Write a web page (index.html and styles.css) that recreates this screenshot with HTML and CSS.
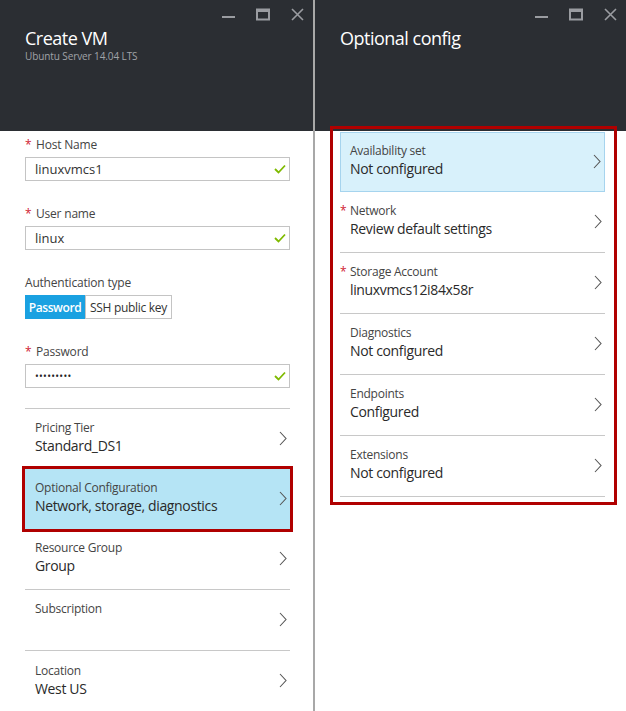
FILE: index.html
```html
<!DOCTYPE html>
<html lang="en">

<head>
    <meta charset="UTF-8">
    <title>Create VM</title>
    <link rel="stylesheet" href="styles.css">
</head>

<body>
    <div class="portal">
        <!-- Create VM blade -->
        <section class="blade blade-create">
            <header class="blade-header">
                <div class="blade-title">
                    <h1>Create VM</h1>
                    <p class="subtitle">Ubuntu Server 14.04 LTS</p>
                </div>
                <div class="window-controls">
                    <svg width="13" height="13" viewBox="0 0 13 13"><rect x="0" y="8" width="13" height="2" fill="currentColor"/></svg>
                    <svg width="14" height="13" viewBox="0 0 14 13"><path d="M1 1.5h12v10h-12z" fill="none" stroke="currentColor" stroke-width="2"/><rect x="1" y="1" width="12" height="3" fill="currentColor"/></svg>
                    <svg width="13" height="13" viewBox="0 0 13 13"><path d="M1 1l11 11M12 1l-11 11" stroke="currentColor" stroke-width="1.6"/></svg>
                </div>
            </header>

            <div class="blade-body form">
                <div class="field">
                    <label class="field-label"><span class="req">*</span>Host Name</label>
                    <div class="input">
                        <span>linuxvmcs1</span>
                        <svg class="check" width="12" height="10" viewBox="0 0 12 10"><path d="M1 5l3.5 3.5L11 1.5" fill="none" stroke="#7fba00" stroke-width="1.8"/></svg>
                    </div>
                </div>

                <div class="field">
                    <label class="field-label"><span class="req">*</span>User name</label>
                    <div class="input">
                        <span>linux</span>
                        <svg class="check" width="12" height="10" viewBox="0 0 12 10"><path d="M1 5l3.5 3.5L11 1.5" fill="none" stroke="#7fba00" stroke-width="1.8"/></svg>
                    </div>
                </div>

                <div class="field">
                    <label class="field-label">Authentication type</label>
                    <div class="toggle">
                        <button class="toggle-btn toggle-on">Password</button>
                        <button class="toggle-btn">SSH public key</button>
                    </div>
                </div>

                <div class="field">
                    <label class="field-label"><span class="req">*</span>Password</label>
                    <div class="input">
                        <span class="dots">•••••••••</span>
                        <svg class="check" width="12" height="10" viewBox="0 0 12 10"><path d="M1 5l3.5 3.5L11 1.5" fill="none" stroke="#7fba00" stroke-width="1.8"/></svg>
                    </div>
                </div>

                <ul class="nav-list">
                    <li class="nav-item">
                        <div class="nav-text">
                            <div class="nav-label">Pricing Tier</div>
                            <div class="nav-value">Standard_DS1</div>
                        </div>
                        <svg class="chevron" width="8" height="15" viewBox="0 0 8 15"><path d="M1 1l6 6.5L1 14" fill="none" stroke="currentColor" stroke-width="1.1"/></svg>
                    </li>
                    <li class="callout callout-left">
                        <div class="nav-item nav-selected">
                            <div class="nav-text">
                                <div class="nav-label">Optional Configuration</div>
                                <div class="nav-value">Network, storage, diagnostics</div>
                            </div>
                            <svg class="chevron" width="8" height="15" viewBox="0 0 8 15"><path d="M1 1l6 6.5L1 14" fill="none" stroke="currentColor" stroke-width="1.1"/></svg>
                        </div>
                    </li>
                    <li class="nav-item">
                        <div class="nav-text">
                            <div class="nav-label">Resource Group</div>
                            <div class="nav-value">Group</div>
                        </div>
                        <svg class="chevron" width="8" height="15" viewBox="0 0 8 15"><path d="M1 1l6 6.5L1 14" fill="none" stroke="currentColor" stroke-width="1.1"/></svg>
                    </li>
                    <li class="nav-item">
                        <div class="nav-text">
                            <div class="nav-label">Subscription</div>
                            <div class="nav-value">&nbsp;</div>
                        </div>
                        <svg class="chevron" width="8" height="15" viewBox="0 0 8 15"><path d="M1 1l6 6.5L1 14" fill="none" stroke="currentColor" stroke-width="1.1"/></svg>
                    </li>
                    <li class="nav-item nav-last">
                        <div class="nav-text">
                            <div class="nav-label">Location</div>
                            <div class="nav-value">West US</div>
                        </div>
                        <svg class="chevron" width="8" height="15" viewBox="0 0 8 15"><path d="M1 1l6 6.5L1 14" fill="none" stroke="currentColor" stroke-width="1.1"/></svg>
                    </li>
                </ul>
            </div>
        </section>

        <!-- Optional config blade -->
        <section class="blade blade-optional">
            <header class="blade-header">
                <div class="blade-title">
                    <h1>Optional config</h1>
                </div>
                <div class="window-controls">
                    <svg width="13" height="13" viewBox="0 0 13 13"><rect x="0" y="8" width="13" height="2" fill="currentColor"/></svg>
                    <svg width="14" height="13" viewBox="0 0 14 13"><path d="M1 1.5h12v10h-12z" fill="none" stroke="currentColor" stroke-width="2"/><rect x="1" y="1" width="12" height="3" fill="currentColor"/></svg>
                    <svg width="13" height="13" viewBox="0 0 13 13"><path d="M1 1l11 11M12 1l-11 11" stroke="currentColor" stroke-width="1.6"/></svg>
                </div>
            </header>

            <div class="callout callout-right">
                <ul class="nav-list">
                    <li class="nav-item nav-selected nav-soft">
                        <div class="nav-text">
                            <div class="nav-label">Availability set</div>
                            <div class="nav-value">Not configured</div>
                        </div>
                        <svg class="chevron" width="8" height="15" viewBox="0 0 8 15"><path d="M1 1l6 6.5L1 14" fill="none" stroke="currentColor" stroke-width="1.1"/></svg>
                    </li>
                    <li class="nav-item">
                        <div class="nav-text">
                            <div class="nav-label"><span class="req req-hang">*</span>Network</div>
                            <div class="nav-value">Review default settings</div>
                        </div>
                        <svg class="chevron" width="8" height="15" viewBox="0 0 8 15"><path d="M1 1l6 6.5L1 14" fill="none" stroke="currentColor" stroke-width="1.1"/></svg>
                    </li>
                    <li class="nav-item">
                        <div class="nav-text">
                            <div class="nav-label"><span class="req req-hang">*</span>Storage Account</div>
                            <div class="nav-value">linuxvmcs12i84x58r</div>
                        </div>
                        <svg class="chevron" width="8" height="15" viewBox="0 0 8 15"><path d="M1 1l6 6.5L1 14" fill="none" stroke="currentColor" stroke-width="1.1"/></svg>
                    </li>
                    <li class="nav-item">
                        <div class="nav-text">
                            <div class="nav-label">Diagnostics</div>
                            <div class="nav-value">Not configured</div>
                        </div>
                        <svg class="chevron" width="8" height="15" viewBox="0 0 8 15"><path d="M1 1l6 6.5L1 14" fill="none" stroke="currentColor" stroke-width="1.1"/></svg>
                    </li>
                    <li class="nav-item">
                        <div class="nav-text">
                            <div class="nav-label">Endpoints</div>
                            <div class="nav-value">Configured</div>
                        </div>
                        <svg class="chevron" width="8" height="15" viewBox="0 0 8 15"><path d="M1 1l6 6.5L1 14" fill="none" stroke="currentColor" stroke-width="1.1"/></svg>
                    </li>
                    <li class="nav-item">
                        <div class="nav-text">
                            <div class="nav-label">Extensions</div>
                            <div class="nav-value">Not configured</div>
                        </div>
                        <svg class="chevron" width="8" height="15" viewBox="0 0 8 15"><path d="M1 1l6 6.5L1 14" fill="none" stroke="currentColor" stroke-width="1.1"/></svg>
                    </li>
                </ul>
            </div>
        </section>
    </div>
</body>

</html>
```

FILE: styles.css
```css
* {
    margin: 0;
    padding: 0;
    box-sizing: border-box;
    font-family: 'Open Sans', 'Noto Sans', sans-serif;
}

body {
    background-color: #fff;
    overflow: hidden;
}

.portal {
    display: flex;
    height: 711px;
}

.blade {
    display: flex;
    flex-direction: column;
    background-color: #fff;
}

.blade-create {
    width: 315px;
    border-right: 2px solid #a8a8a8;
}

.blade-optional {
    flex: 1;
}

.blade-header {
    height: 131px;
    flex-shrink: 0;
    background-color: #2b2e33;
    display: flex;
    justify-content: space-between;
    align-items: flex-start;
}

.blade-title {
    padding: 26px 0 0 25px;
}

.blade-title h1 {
    font-size: 18px;
    line-height: 24px;
    font-weight: 400;
    letter-spacing: -0.5px;
    color: #fff;
}

.subtitle {
    font-size: 10px;
    line-height: 13px;
    letter-spacing: -0.1px;
    color: #a0a3a8;
}

.window-controls {
    display: flex;
    gap: 21px;
    padding: 8px 9px 0 0;
    color: #9a9ca1;
}

/* form */

.form {
    padding: 6px 23px 0 25px;
    flex: 1;
}

.field {
    margin-bottom: 25px;
}

.field-label {
    display: block;
    font-size: 12px;
    line-height: 16px;
    letter-spacing: -0.2px;
    color: #444;
    margin-bottom: 4px;
}

.req {
    color: #d02030;
    display: inline-block;
    width: 11px;
}

.req-hang {
    margin-left: -10px;
    width: 10px;
}

.input {
    height: 24px;
    border: 1px solid #c4c4c4;
    display: flex;
    align-items: center;
    justify-content: space-between;
    padding: 0 3px 0 9px;
    font-size: 13px;
    color: #333;
}

.dots {
    font-size: 10px;
    letter-spacing: 0.3px;
    color: #222;
}

.toggle {
    display: flex;
}

.toggle-btn {
    height: 24px;
    font-size: 12px;
    letter-spacing: -0.3px;
    border: 1px solid #c4c4c4;
    background-color: #fff;
    color: #333;
    padding: 0 4px;
}

.toggle-on {
    background-color: #1aa1e1;
    border-color: #1aa1e1;
    color: #fff;
    font-weight: 600;
    letter-spacing: -0.4px;
    width: 60px;
    padding: 0;
}

/* navigation lists */

.nav-list {
    list-style: none;
    border-top: 1px solid #c8c8c8;
    margin-top: -5px;
}

.nav-item {
    height: 61px;
    display: flex;
    justify-content: space-between;
    align-items: center;
    padding: 0 3px 2px 10px;
    border-bottom: 1px solid #c8c8c8;
}

.nav-last {
    border-bottom: none;
}

.nav-label {
    font-size: 12px;
    line-height: 16px;
    letter-spacing: -0.25px;
    color: #444;
}

.nav-value {
    font-size: 14px;
    line-height: 20px;
    letter-spacing: -0.35px;
    color: #2a2a2a;
}

.chevron {
    color: #555;
}

.nav-selected {
    background-color: #b5e4f5;
    height: 60px;
    border-bottom: none;
}

/* red annotation boxes */

.callout {
    border: 3px solid #b00000;
    position: relative;
    z-index: 1;
}

.callout-left {
    margin: -4px -3px -3px;
}

.callout-right {
    margin: -5px 9px 0 15px;
    padding: 3px 9px 5px 7px;
}

.callout-right .nav-list {
    border-top: none;
    margin-top: 0;
}

.nav-soft {
    background-color: #d8f1fb;
    border: 1px solid #a6d4ee;
    padding-left: 9px;
    height: 60px;
}
```
